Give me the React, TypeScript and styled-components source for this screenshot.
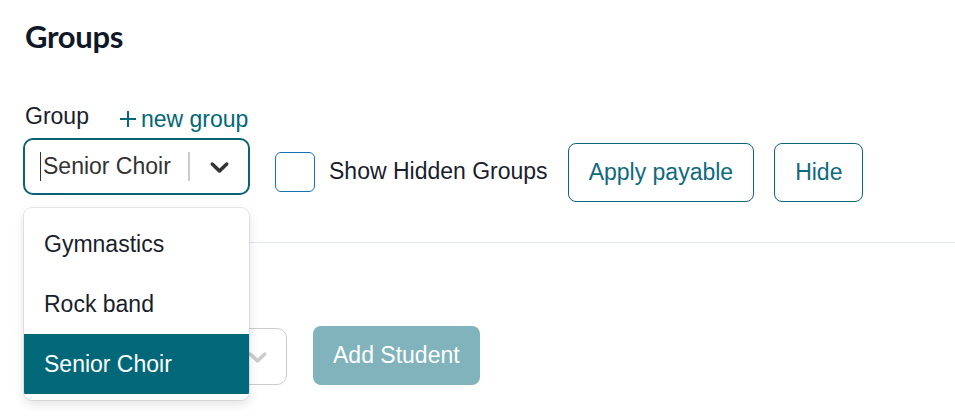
import React from "react";
import styled, { createGlobalStyle } from "styled-components";

const GlobalStyle = createGlobalStyle`
  html, body { margin: 0; padding: 0; background: #ffffff; }
  body { font-family: "Liberation Sans", Arial, sans-serif; color: #1a1d2b; }
  * { box-sizing: border-box; }
`;

const TEAL = "#006878";
const FONT_SIZE = "23px";

const Page = styled.div`
  position: relative;
  width: 955px;
  height: 418px;
  overflow: hidden;
  padding: 17px 0 0 24px;
`;

const Heading = styled.h1`
  margin: 0 0 0 1px;
  font-family: "Lato", "Noto Sans", sans-serif;
  font-weight: 700;
  font-size: 31px;
  line-height: 38px;
  color: #101828;
  letter-spacing: -0.3px;
`;

const Toolbar = styled.div`
  display: grid;
  grid-template-columns: auto auto auto auto;
  grid-template-rows: 38px 64px;
  justify-content: start;
  column-gap: 20px;
  margin-top: 45px;
  font-size: ${FONT_SIZE};
`;

const LabelRow = styled.div`
  grid-column: 1 / 2;
  display: flex;
  align-items: flex-end;
  gap: 31px;
  padding-left: 1px;
`;

const Label = styled.span`
  line-height: 26px;
  margin-bottom: 9px;
  color: #1a1d2b;
`;

const AddLink = styled.a`
  display: inline-flex;
  align-items: center;
  gap: 5px;
  color: ${TEAL};
  line-height: 26px;
  margin-bottom: 6px;
  text-decoration: none;
  cursor: pointer;
`;

const FieldWrap = styled.div`
  position: relative;
  grid-row: 2;
  grid-column: 1;
  align-self: start;
  margin-left: -1px;
`;

const SelectBox = styled.div<{ $focused?: boolean; $width: number }>`
  display: flex;
  align-items: center;
  width: ${(p) => p.$width}px;
  height: 57px;
  border: ${(p) => (p.$focused ? `2px solid #0b6273` : "1px solid #cccccc")};
  border-radius: 10px;
  background: #fff;
  padding-left: ${(p) => (p.$focused ? 15 : 16)}px;
`;

const Caret = styled.span`
  width: 1px;
  height: 29px;
  background: #333;
  margin-right: 2px;
`;

const SelectValue = styled.span`
  flex: 1;
  color: #333333;
  white-space: nowrap;
`;

const Separator = styled.span`
  width: 2px;
  height: 29px;
  background: #cccccc;
`;

const Indicator = styled.span<{ $muted?: boolean }>`
  display: flex;
  align-items: center;
  justify-content: center;
  width: 58px;
  color: ${(p) => (p.$muted ? "#cccccc" : "#333333")};
`;

const CheckField = styled.label`
  grid-row: 2;
  grid-column: 2;
  align-self: center;
  display: flex;
  align-items: center;
  gap: 14px;
  margin-left: 5px;
  margin-top: 3px;
  color: #1a1d2b;
`;

const CheckBox = styled.span`
  width: 40px;
  height: 40px;
  border: 1px solid #1773b8;
  border-radius: 6px;
`;

const OutlineButton = styled.button<{ $col: number }>`
  grid-row: 2;
  grid-column: ${(p) => p.$col};
  align-self: end;
  height: 59px;
  padding: 0 20px;
  border: 1px solid #0f6478;
  border-radius: 8px;
  background: #fff;
  color: #0f6a80;
  font-family: inherit;
  font-size: ${FONT_SIZE};
  cursor: pointer;
`;

const Divider = styled.hr`
  margin: 40px 0 0 0;
  border: none;
  border-top: 1px solid #e4e9f1;
`;

const AddRow = styled.div`
  display: flex;
  align-items: center;
  gap: 26px;
  margin-top: 82px;
  font-size: ${FONT_SIZE};
`;

const StudentSelect = styled.div`
  margin-top: 3px;
`;

const FilledButton = styled.button`
  height: 59px;
  padding: 0 20px;
  border: none;
  border-radius: 8px;
  background: #80b3bc;
  color: #ffffff;
  font-family: inherit;
  font-size: ${FONT_SIZE};
`;

const Menu = styled.ul`
  position: absolute;
  top: 70px;
  left: 1px;
  width: 225px;
  margin: 0;
  padding: 6px 0;
  list-style: none;
  background: #fff;
  border-radius: 8px;
  box-shadow: 0 0 0 1px rgba(0, 0, 0, 0.08), 0 4px 11px rgba(0, 0, 0, 0.12);
  overflow: hidden;
  z-index: 10;
  font-size: ${FONT_SIZE};
`;

const Option = styled.li<{ $selected?: boolean }>`
  display: flex;
  align-items: center;
  height: 60px;
  padding-left: 20px;
  background: ${(p) => (p.$selected ? TEAL : "transparent")};
  color: ${(p) => (p.$selected ? "#ffffff" : "#1a1d2b")};
`;

const Chevron = ({ size = 31 }: { size?: number }) => (
  <svg width={size} height={size} viewBox="0 0 20 20" fill="currentColor" aria-hidden>
    <path d="M4.516 7.548c0.436-0.446 1.043-0.481 1.576 0l3.908 3.747 3.908-3.747c0.533-0.481 1.141-0.446 1.574 0 0.436 0.445 0.408 1.197 0 1.615-0.406 0.418-4.695 4.502-4.695 4.502-0.217 0.223-0.502 0.335-0.787 0.335s-0.57-0.112-0.789-0.335c0 0-4.287-4.084-4.695-4.502s-0.436-1.17 0-1.615z" />
  </svg>
);

const Plus = () => (
  <svg width="16" height="16" viewBox="0 0 16 16" aria-hidden>
    <path d="M8 0v16M0 8h16" stroke="currentColor" strokeWidth="2" fill="none" />
  </svg>
);

const options = ["Gymnastics", "Rock band", "Senior Choir"];

export default function App() {
  return (
    <>
      <GlobalStyle />
      <Page>
        <Heading>Groups</Heading>
        <Toolbar>
          <LabelRow>
            <Label>Group</Label>
            <AddLink>
              <Plus />
              new group
            </AddLink>
          </LabelRow>
          <FieldWrap>
            <SelectBox $focused $width={227}>
              <Caret />
              <SelectValue>Senior Choir</SelectValue>
              <Separator />
              <Indicator>
                <Chevron />
              </Indicator>
            </SelectBox>
            <Menu>
              {options.map((o) => (
                <Option key={o} $selected={o === "Senior Choir"}>
                  {o}
                </Option>
              ))}
            </Menu>
          </FieldWrap>
          <CheckField>
            <CheckBox />
            Show Hidden Groups
          </CheckField>
          <OutlineButton $col={3}>Apply payable</OutlineButton>
          <OutlineButton $col={4}>Hide</OutlineButton>
        </Toolbar>
        <Divider />
        <AddRow>
          <StudentSelect>
            <SelectBox $width={263}>
              <SelectValue />
              <Indicator $muted>
                <Chevron />
              </Indicator>
            </SelectBox>
          </StudentSelect>
          <FilledButton>Add Student</FilledButton>
        </AddRow>
      </Page>
    </>
  );
}
